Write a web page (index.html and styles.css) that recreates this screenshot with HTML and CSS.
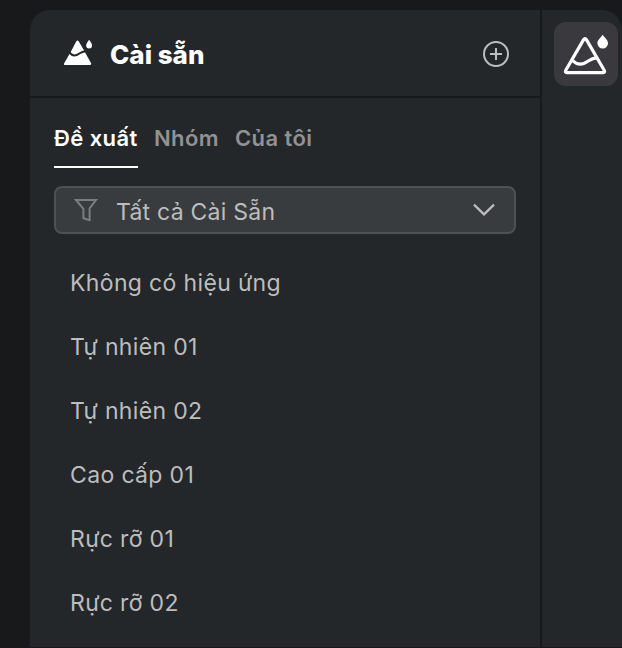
FILE: index.html
```html
<!DOCTYPE html>
<html lang="vi">
<head>
  <meta charset="UTF-8">
  <meta name="viewport" content="width=device-width, initial-scale=1.0">
  <title>Cài sẵn</title>
  <link rel="stylesheet" href="styles.css">
</head>
<body>
  <div class="app">
    <main class="panel">
      <header class="panel-header">
        <svg class="logo" width="30" height="28" viewBox="0 0 30 28">
          <path d="M12.2 2.4Q13.5 .4 14.8 2.4L20.1 11.6C16.2 12 13.7 15.6 10.2 15.4C8.6 15.3 7.4 14.4 6.7 13.1Z"/>
          <path d="M5.5 15C7 16.7 8.4 17.5 10.3 17.5C14.4 17.5 16.9 13.7 21.1 13.5L27 23.9Q27.7 26 25.8 26H1.2Q-.7 26 .3 23.9Z"/>
          <path d="M25.1 .8C26.6 3 28 4.5 28 6.6A2.9 2.9 0 0 1 22.2 6.6C22.2 4.5 23.6 3 25.1 .8Z"/>
        </svg>
        <h1>Cài sẵn</h1>
        <button class="add" type="button" aria-label="Thêm">
          <svg width="28" height="28" viewBox="0 0 28 28">
            <circle cx="14" cy="14" r="12"/>
            <path d="M14 8v12M8 14h12"/>
          </svg>
        </button>
      </header>

      <nav class="tabs">
        <a class="tab active">Đề xuất</a>
        <a class="tab">Nhóm</a>
        <a class="tab">Của tôi</a>
      </nav>

      <div class="select">
        <svg class="funnel" width="24" height="24" viewBox="0 0 24 24">
          <path d="M2 2H22L15.6 10.3V22.2L9.4 20.3V10.8Z"/>
        </svg>
        <span>Tất cả Cài Sẵn</span>
        <svg class="chevron" width="24" height="16" viewBox="0 0 24 16">
          <path d="M2 2.6L12 12.4L22 2.6"/>
        </svg>
      </div>

      <ul class="presets">
        <li>Không có hiệu ứng</li>
        <li>Tự nhiên 01</li>
        <li>Tự nhiên 02</li>
        <li>Cao cấp 01</li>
        <li>Rực rỡ 01</li>
        <li>Rực rỡ 02</li>
      </ul>
    </main>

    <aside class="toolbar">
      <button class="tool" type="button" aria-label="Cài sẵn">
        <svg width="64" height="64" viewBox="0 0 64 64">
          <path class="line" d="M29.6 17.6Q31 15.4 32.4 17.6L50.2 48.2Q51.4 50.6 49.2 50.6H13Q10.6 50.6 11.8 48.2Z"/>
          <path class="line" d="M18.6 38.5C21 41 23.5 42.2 26.4 42.2C32.5 42.2 35 36.4 42.2 35.8"/>
          <path class="drop" d="M48.7 12.8C50.9 16 54 18 54 21.2A5.3 5.3 0 0 1 43.4 21.2C43.4 18 46.5 16 48.7 12.8Z"/>
        </svg>
      </button>
    </aside>
  </div>
</body>
</html>
```

FILE: styles.css
```css
* {
  box-sizing: border-box;
}

body {
  margin: 0;
  height: 648px;
  overflow: hidden;
  background-color: #18191a;
  color: #bdbdbd;
  font-family: Inter, "Liberation Sans", sans-serif;
}

button {
  display: flex;
  padding: 0;
  border: none;
  background: none;
}

.app {
  display: flex;
  gap: 2px;
  height: 648px;
  padding: 10px 0 0 30px;
  border-bottom: 1px solid #1e161c;
}

.panel {
  width: 510px;
  background-color: #232729;
  border-top-left-radius: 20px;
}

.panel-header {
  display: flex;
  align-items: center;
  height: 88px;
  padding: 0 30px 0 34px;
  border-bottom: 2px solid #18191a;
}

.logo {
  fill: #fff;
}

h1 {
  flex: 1;
  margin: 3px 0 0 16px;
  font-size: 26px;
  font-weight: 800;
  line-height: 32px;
  color: #fff;
}

.add {
  margin-top: 2px;
}

.add svg {
  fill: none;
  stroke: #bdbdbd;
  stroke-width: 2;
}

.tabs {
  display: flex;
  gap: 16px;
  height: 70px;
  padding-left: 24px;
}

.tab {
  padding-top: 25px;
  font-size: 22px;
  font-weight: 600;
  line-height: 30px;
  letter-spacing: 0.4px;
  color: #919293;
}

.tab.active {
  width: 84px;
  border-bottom: 2px solid #fff;
  color: #fff;
}

.select {
  display: flex;
  align-items: center;
  height: 48px;
  margin: 18px 24px 0;
  padding: 0 18px;
  border: 2px solid #4e5052;
  border-radius: 8px;
  background-color: #393c3e;
  font-size: 23px;
  letter-spacing: 0.25px;
}

.select span {
  flex: 1;
  margin: 3px 0 0 18px;
}

.funnel {
  fill: none;
  stroke: #7b7d7f;
  stroke-width: 2;
}

.chevron {
  fill: none;
  stroke: #bdbdbd;
  stroke-width: 2.2;
}

.presets {
  margin: 17px 0 0;
  padding: 0 40px;
  list-style: none;
  font-size: 23px;
  line-height: 64px;
  letter-spacing: 0.35px;
}

.toolbar {
  flex: 1;
  padding: 12px 0 0 12px;
  background-color: #232729;
  border-top-right-radius: 20px;
}

.tool {
  width: 64px;
  border-radius: 12px;
  background-color: #3a3a3e;
}

.tool .line {
  fill: none;
  stroke: #fff;
  stroke-width: 3.2;
  stroke-linejoin: round;
}

.tool .drop {
  fill: #fff;
}
```
